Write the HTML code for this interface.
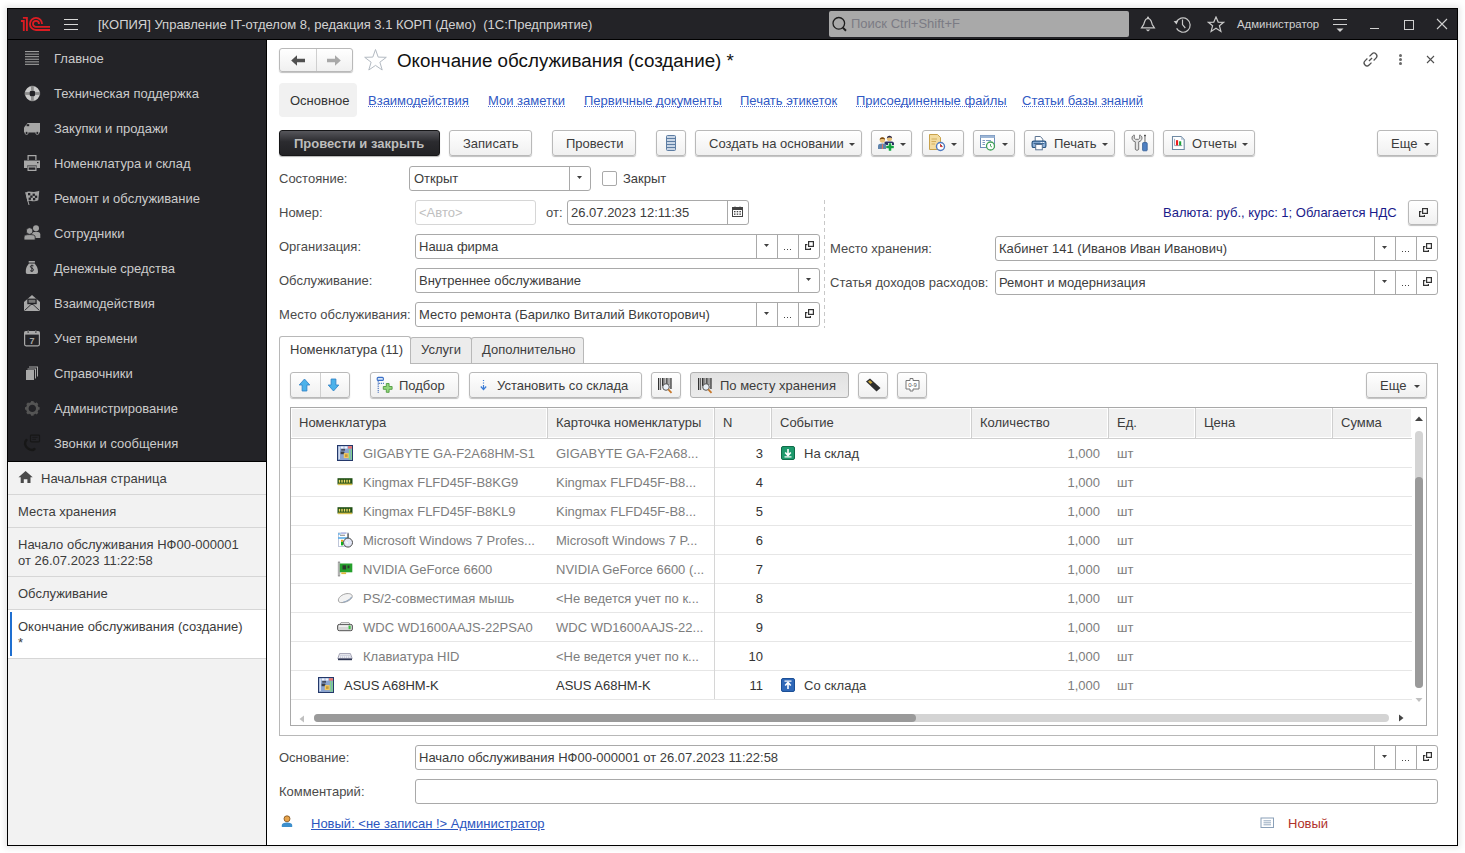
<!DOCTYPE html>
<html><head><meta charset="utf-8">
<style>
*{box-sizing:border-box}
html,body{margin:0;padding:0}
body{width:1465px;height:853px;overflow:hidden;background:#fff;position:relative;font-family:"Liberation Sans",sans-serif;font-size:13px;color:#3c3c3c}
.a{position:absolute}
.t{position:absolute;white-space:nowrap;line-height:15px;font-size:13px}
.sb{color:#cbcbcb}
.ic{position:absolute}
.lnk{color:#3159c4;border-bottom:1px dotted #4d6bd0;line-height:16px;height:14px}
.btn{position:absolute;border:1px solid #b9b9b9;border-radius:3px;background:linear-gradient(#fff,#f0f0f0);box-shadow:0 1px 1px rgba(0,0,0,.25);color:#333}
.fld{position:absolute;border:1px solid #a9a9a9;border-radius:3px;background:#fff}
.dv{position:absolute;top:0;bottom:0;width:1px;background:#a9a9a9}
.arr{position:absolute;width:0;height:0;border-left:3px solid transparent;border-right:3px solid transparent;border-top:3px solid #404040}
</style></head><body>
<!-- window -->
<div class="a" style="left:7px;top:8px;width:1451px;height:838px;border:1px solid #000;background:#fff;box-shadow:0 0 6px 2px rgba(0,0,0,.10)"></div>
<!-- title bar -->
<div class="a" style="left:8px;top:9px;width:1449px;height:30px;background:#232327"></div>
<div class="a" style="left:8px;top:39px;width:1449px;height:1px;background:#000"></div>
<!-- sidebar -->
<div class="a" style="left:8px;top:40px;width:258px;height:421px;background:#232327"></div>
<div class="a" style="left:8px;top:461px;width:258px;height:1px;background:#000"></div>
<div class="a" style="left:8px;top:462px;width:258px;height:383px;background:#f2f2f2"></div>
<div class="a" style="left:266px;top:40px;width:1px;height:805px;background:#000"></div>

<!-- TITLEBAR CONTENT -->
<div class="t" style="left:98px;top:17px;color:#d2d2d2">[КОПИЯ] Управление IT-отделом 8, редакция 3.1 КОРП (Демо)&nbsp; (1С:Предприятие)</div>

<!-- logo -->
<svg class="ic" style="left:18px;top:14px" width="34" height="20" viewBox="0 0 34 20"><g fill="none" stroke="#dc1c22" stroke-width="1.85" stroke-linejoin="miter">
<path d="M2.95 6.95H5.8V17"/><path d="M4.9 3.85H8.9V17"/>
<path d="M24.05 9.9A6.05 6.05 0 1 0 18 15.95H32"/><path d="M21 9.9A3 3 0 1 0 18 12.9H32"/></g></svg>
<div class="a" style="left:64px;top:19px;width:14px;height:1px;background:#d8d8d8"></div>
<div class="a" style="left:64px;top:24px;width:14px;height:1px;background:#d8d8d8"></div>
<div class="a" style="left:64px;top:29px;width:14px;height:1px;background:#d8d8d8"></div>
<!-- search -->
<div class="a" style="left:829px;top:11px;width:300px;height:26px;background:#a9a9a9;border-radius:2px"></div>
<svg class="ic" style="left:830px;top:15px" width="20" height="20" viewBox="0 0 20 20"><circle cx="8.8" cy="8.3" r="5.8" fill="none" stroke="#1e1e1e" stroke-width="1.3"/><path d="M12.8 12.6L16 15.8" stroke="#1e1e1e" stroke-width="2"/></svg>
<div class="t" style="left:851px;top:16px;color:#7b7b84">Поиск Ctrl+Shift+F</div>
<!-- bell -->
<svg class="ic" style="left:1140px;top:16px" width="16" height="17" viewBox="0 0 16 17"><g fill="none" stroke="#c8c8c8" stroke-width="1.2"><path d="M1.5 11.8H14.4L12.3 8.6C11.6 7.4 11.6 2.6 8 2.4C4.4 2.6 4.4 7.4 3.6 8.6Z"/></g><circle cx="8" cy="1.6" r="1" fill="#c8c8c8"/><path d="M5.6 13.4H10.4L8 15.4Z" fill="#c8c8c8"/></svg>
<!-- history -->
<svg class="ic" style="left:1173px;top:15px" width="19" height="19" viewBox="0 0 19 19"><g fill="none" stroke="#c8c8c8" stroke-width="1.2"><path d="M3.3 7.3A7.2 7.2 0 1 1 3.6 13.4"/><path d="M9.5 4.6V9.6L12.3 13"/></g><path d="M0.6 6.2L5.2 5.6L3.6 9.6Z" fill="#c8c8c8"/></svg>
<!-- star -->
<svg class="ic" style="left:1207px;top:16px" width="18" height="17" viewBox="0 0 18 17"><path d="M9 1L11.2 6.1L16.6 6.3L12.4 9.7L13.9 15.4L9 12.3L4.1 15.4L5.6 9.7L1.4 6.3L6.8 6.1Z" fill="none" stroke="#c8c8c8" stroke-width="1.2" stroke-linejoin="miter"/></svg>
<div class="t" style="left:1237px;top:17px;color:#d0d0d0;font-size:11.4px">Администратор</div>
<!-- filter -->
<div class="a" style="left:1333px;top:19px;width:14px;height:1px;background:#d0d0d0"></div>
<div class="a" style="left:1333px;top:24px;width:14px;height:1px;background:#d0d0d0"></div>
<svg class="ic" style="left:1336px;top:28px" width="8" height="5" viewBox="0 0 8 5"><path d="M0.5 0.5H7.5L4 4Z" fill="#d0d0d0"/></svg>
<div class="a" style="left:1370px;top:28px;width:9px;height:1px;background:#d0d0d0"></div>
<div class="a" style="left:1404px;top:20px;width:10px;height:10px;border:1.2px solid #d0d0d0"></div>
<svg class="ic" style="left:1436px;top:18px" width="12" height="12" viewBox="0 0 12 12"><path d="M1 1L11 11M11 1L1 11" stroke="#d0d0d0" stroke-width="1.1"/></svg>

<svg class="ic" style="left:0;top:0" width="266" height="460" viewBox="0 0 266 460">
<g fill="#9c9c9c"><rect x="25" y="51" width="14" height="1.1"/><rect x="25" y="53.6" width="14" height="1.1"/><rect x="25" y="56.1" width="14" height="1.1"/><rect x="25" y="58.7" width="14" height="1.1"/><rect x="25" y="61.3" width="14" height="1.1"/><rect x="25" y="63.8" width="14" height="1.1"/></g>
<circle cx="32.4" cy="93.5" r="5.3" fill="none" stroke="#cacaca" stroke-width="4.4"/>
<g fill="#8c8c8c"><rect x="31" y="85.8" width="2.8" height="4.6"/><rect x="31" y="96.6" width="2.8" height="4.6"/><rect x="24.7" y="92.1" width="4.6" height="2.8"/><rect x="35.5" y="92.1" width="4.6" height="2.8"/></g>
<path d="M24 132.5V127.6L27.6 123H40V132.5Z" fill="#a6a6a6"/><rect x="26.6" y="124.2" width="2.6" height="2" fill="#232327"/><circle cx="26.6" cy="133" r="1.5" fill="#232327" stroke="#a6a6a6" stroke-width="0.8"/><circle cx="37.3" cy="133" r="1.5" fill="#232327" stroke="#a6a6a6" stroke-width="0.8"/>
<g fill="#a8a8a8"><path d="M27.5 155H36.5V160H35.3V156.2H28.7V160H27.5Z"/><path d="M24 160.5H40V168H36.8V165.5H27.2V168H24Z"/><path d="M27.5 166.2H36.5V171H27.5ZM28.7 167.4V169.8H35.3V167.4Z"/></g><rect x="37" y="162" width="1.5" height="1.2" fill="#232327"/>
<path d="M25.8 192.5C29 190 33 193.5 39.3 190.8L38.3 200.3C33 203 29 199.5 27.3 201.5Z" fill="#a2a2a2"/>
<g fill="#232327"><rect x="28" y="193" width="2.3" height="2.3"/><rect x="32.6" y="193.6" width="2.3" height="2.3"/><rect x="30.3" y="195.5" width="2.3" height="2.3"/><rect x="34.9" y="195.6" width="2.3" height="2.3"/><rect x="28.6" y="197.6" width="2.3" height="2.3"/><rect x="33" y="198" width="2.3" height="2.3"/></g>
<path d="M25.6 192.3L29 205" stroke="#a2a2a2" stroke-width="1"/>
<g fill="#a0a0a0"><circle cx="36" cy="228.3" r="3"/><path d="M31.5 238V234.5C31.5 232.5 33.5 231.8 36 231.8C38.6 231.8 40.3 232.5 40.3 234.5V238Z"/><circle cx="29.6" cy="231" r="3.3" stroke="#232327" stroke-width="0.8"/><path d="M24 240V237C24 235 26.3 234.6 29.6 234.6C33 234.6 35.2 235 35.2 237V240Z" stroke="#232327" stroke-width="0.8"/></g>
<g fill="#a8a8a8"><rect x="28.7" y="261" width="6.2" height="1.6"/><path d="M29 263.6H34.6C35.6 265 38 267 38 271.5C38 273.3 37.4 274 36 274H27.6C26.2 274 25.8 273.3 25.8 271.5C25.8 267 28 265 29 263.6Z"/></g>
<path d="M33.5 265.8C32.5 265 30.2 265.2 30.4 266.8C30.6 268.5 33.5 267.8 33.5 269.8C33.5 271.5 31 271.4 30.1 270.6M31.9 264.8V272" stroke="#232327" stroke-width="0.9" fill="none"/>
<path d="M24 302L32 295L40 302V311H24Z" fill="#a8a8a8"/><rect x="27.3" y="298.6" width="9.4" height="5.6" fill="#232327"/><rect x="28.6" y="299.8" width="6.8" height="3" fill="#777"/><path d="M24.5 310.5L31 304.5H33L39.5 310.5" stroke="#232327" stroke-width="0.9" fill="none"/>
<rect x="24.6" y="331.6" width="14.8" height="14.2" rx="1.5" fill="none" stroke="#a8a8a8" stroke-width="1.2"/><rect x="24.6" y="331.6" width="14.8" height="3" fill="#a8a8a8"/><path d="M28.2 330V333M35.8 330V333" stroke="#232327" stroke-width="1.2"/><path d="M28.2 330.2V332.6M35.8 330.2V332.6" stroke="#a8a8a8" stroke-width="0.7"/>
<text x="32" y="344.4" font-family="Liberation Sans" font-weight="bold" font-size="9" fill="#a8a8a8" text-anchor="middle">7</text>
<g fill="#a8a8a8"><rect x="26" y="370" width="8" height="10"/><path d="M27.5 368.5H36V378.5H35V369.5H27.5Z"/><path d="M29 366.5H38V376.5H37V367.5H29Z"/></g>
<g transform="translate(32.3 408.4)"><circle r="5" fill="none" stroke="#555" stroke-width="2.6"/><g fill="#555"><rect x="-1.3" y="-7.3" width="2.6" height="3"/><rect x="-1.3" y="4.3" width="2.6" height="3"/><rect x="-7.3" y="-1.3" width="3" height="2.6"/><rect x="4.3" y="-1.3" width="3" height="2.6"/><g transform="rotate(45)"><rect x="-1.3" y="-7.3" width="2.6" height="3"/><rect x="-1.3" y="4.3" width="2.6" height="3"/><rect x="-7.3" y="-1.3" width="3" height="2.6"/><rect x="4.3" y="-1.3" width="3" height="2.6"/></g></g></g>
<path d="M26.5 440C24.2 442 24.5 446 28 448.5C31 450.5 33 450.4 34.5 449" stroke="#171717" stroke-width="2.4" fill="none" stroke-linecap="round"/>
<rect x="30.5" y="435.2" width="9" height="6.6" rx="0.8" fill="none" stroke="#171717" stroke-width="1.2"/><path d="M32.3 437.4H37.7M32.3 439.4H36" stroke="#171717" stroke-width="0.8"/>
</svg>
<!-- SIDEBAR ITEMS -->
<div class="t sb" style="left:54px;top:51px">Главное</div>
<div class="t sb" style="left:54px;top:86px">Техническая поддержка</div>
<div class="t sb" style="left:54px;top:121px">Закупки и продажи</div>
<div class="t sb" style="left:54px;top:156px">Номенклатура и склад</div>
<div class="t sb" style="left:54px;top:191px">Ремонт и обслуживание</div>
<div class="t sb" style="left:54px;top:226px">Сотрудники</div>
<div class="t sb" style="left:54px;top:261px">Денежные средства</div>
<div class="t sb" style="left:54px;top:296px">Взаимодействия</div>
<div class="t sb" style="left:54px;top:331px">Учет времени</div>
<div class="t sb" style="left:54px;top:366px">Справочники</div>
<div class="t sb" style="left:54px;top:401px">Администрирование</div>
<div class="t sb" style="left:54px;top:436px">Звонки и сообщения</div>

<!-- OPEN WINDOWS -->
<div class="a" style="left:8px;top:494px;width:258px;height:1px;background:#d6d6d6"></div>
<div class="a" style="left:8px;top:527px;width:258px;height:1px;background:#d6d6d6"></div>
<div class="a" style="left:8px;top:576px;width:258px;height:1px;background:#d6d6d6"></div>
<div class="a" style="left:8px;top:609px;width:258px;height:1px;background:#d6d6d6"></div>
<div class="a" style="left:8px;top:610px;width:258px;height:48px;background:#fff"></div>
<div class="a" style="left:8px;top:658px;width:258px;height:1px;background:#d6d6d6"></div>
<div class="a" style="left:10px;top:612px;width:2px;height:44px;background:#1f6fd0"></div>
<svg class="ic" style="left:18px;top:470px" width="16" height="14" viewBox="0 0 16 14"><path d="M0.5 7.3L7.6 1L14.7 7.3H12.5V13H9.4V9.2H5.8V13H2.7V7.3Z" fill="#4a4a4a"/></svg>
<div class="t" style="left:41px;top:471px">Начальная страница</div>
<div class="t" style="left:18px;top:504px">Места хранения</div>
<div class="t" style="left:18px;top:537px">Начало обслуживания НФ00-000001</div>
<div class="t" style="left:18px;top:553px">от 26.07.2023 11:22:58</div>
<div class="t" style="left:18px;top:586px">Обслуживание</div>
<div class="t" style="left:18px;top:619px">Окончание обслуживания (создание)</div>
<div class="t" style="left:18px;top:635px">*</div>

<!--CONTENT-->
<div class="btn" style="left:279px;top:48px;width:74px;height:24px;"></div>
<div class="a" style="left:316px;top:49px;width:1px;height:22px;background:#cfcfcf"></div>
<svg class="ic" style="left:290px;top:54px" width="16" height="13" viewBox="0 0 16 13"><path d="M1.2 6.5L7 1.3V4.8H15V8.2H7V11.7Z" fill="#505050"/></svg>
<svg class="ic" style="left:326px;top:54px" width="16" height="13" viewBox="0 0 16 13"><path d="M14.8 6.5L9 1.3V4.8H1V8.2H9V11.7Z" fill="#a8a8a8"/></svg>
<svg class="ic" style="left:363px;top:48px" width="25" height="24" viewBox="0 0 25 24"><path d="M12.5 1.5L15.2 9.1L23.3 9.3L16.9 14.2L19.2 22L12.5 17.4L5.8 22L8.1 14.2L1.7 9.3L9.8 9.1Z" fill="none" stroke="#b3bac2" stroke-width="1"/></svg>
<div class="t" style="left:397px;top:50px;font-size:18.8px;line-height:22px;color:#111">Окончание обслуживания (создание) *</div>
<svg class="ic" style="left:1362px;top:51px" width="17" height="17" viewBox="0 0 17 17"><g transform="rotate(-45 8.5 8.5)" fill="none" stroke="#505050" stroke-width="1.25"><path d="M7 5.6H3.6A2.9 2.9 0 0 0 3.6 11.4H7"/><path d="M10 5.6H13.4A2.9 2.9 0 0 1 13.4 11.4H10"/><path d="M6.3 8.5H10.7"/></g></svg>
<div class="a" style="left:1399px;top:54px;width:3px;height:3px;background:#6a6a6a;border-radius:50%"></div>
<div class="a" style="left:1399px;top:58px;width:3px;height:3px;background:#6a6a6a;border-radius:50%"></div>
<div class="a" style="left:1399px;top:62px;width:3px;height:3px;background:#6a6a6a;border-radius:50%"></div>
<svg class="ic" style="left:1426px;top:55px" width="9" height="9" viewBox="0 0 9 9"><path d="M1 1L8 8M8 1L1 8" stroke="#505050" stroke-width="1.1"/></svg>
<div class="a" style="left:279px;top:83px;width:78px;height:34px;background:#f1f1f1;border-radius:4px"></div>
<div class="t" style="left:290px;top:93px;color:#333">Основное</div>
<div class="t lnk" style="left:368px;top:93px">Взаимодействия</div>
<div class="t lnk" style="left:488px;top:93px">Мои заметки</div>
<div class="t lnk" style="left:584px;top:93px">Первичные документы</div>
<div class="t lnk" style="left:740px;top:93px">Печать этикеток</div>
<div class="t lnk" style="left:856px;top:93px">Присоединенные файлы</div>
<div class="t lnk" style="left:1022px;top:93px">Статьи базы знаний</div>
<div class="a" style="left:279px;top:130px;width:161px;height:26px;border:1px solid #161618;border-radius:3px;background:linear-gradient(#56565b 0%,#2b2b2f 45%,#222225 100%);box-shadow:0 1px 1px rgba(0,0,0,.3)"></div>
<div class="t" style="left:294px;top:136px;font-weight:bold;color:#bdbdbd">Провести и закрыть</div>
<div class="btn" style="left:449px;top:130px;width:83px;height:26px;"></div>
<div class="t" style="left:463px;top:136px;">Записать</div>
<div class="btn" style="left:552px;top:130px;width:84px;height:26px;"></div>
<div class="t" style="left:566px;top:136px;">Провести</div>
<div class="btn" style="left:656px;top:130px;width:30px;height:26px;"></div>
<svg class="ic" style="left:664px;top:134px" width="14" height="18" viewBox="0 0 14 18"><rect x="2.5" y="1.5" width="9" height="15" rx="1" fill="#c9d6e6" stroke="#5d7da3" stroke-width="1"/><path d="M3 4.5H11M3 7.5H11M3 10.5H11M3 13.5H11" stroke="#5d7da3" stroke-width="1"/></svg>
<div class="btn" style="left:695px;top:130px;width:167px;height:26px;"></div>
<div class="t" style="left:709px;top:136px;">Создать на основании</div>
<svg class="ic" style="left:849px;top:143px" width="6" height="3" viewBox="0 0 6 3"><path d="M0 0H6L3 3Z" fill="#404040"/></svg>
<div class="btn" style="left:871px;top:130px;width:41px;height:26px;"></div>
<svg class="ic" style="left:900px;top:143px" width="6" height="3" viewBox="0 0 6 3"><path d="M0 0H6L3 3Z" fill="#404040"/></svg>
<svg class="ic" style="left:877px;top:134px" width="18" height="18" viewBox="0 0 18 18"><path d="M7.5 11V8.3C7.5 7.4 9.6 7.6 12.5 7.6C15.4 7.6 17 7.9 17 9.5V11Z" fill="#2b3264"/><circle cx="12.5" cy="4.4" r="2.6" fill="#e9c27a"/><path d="M9.9 4.2C9.9 2.6 11 1.7 12.5 1.7C14 1.7 15.1 2.6 15.1 4.2C14.3 3.2 10.7 3.2 9.9 4.2Z" fill="#2a2a52"/><path d="M1 15V11.8C1 10.4 2.8 9.6 5.4 9.6C8 9.6 9.6 10.4 9.6 11.8V15Z" fill="#5e84ad"/><path d="M5 10H5.9L6.1 15H4.8Z" fill="#e0785e"/><circle cx="5.4" cy="6" r="2.7" fill="#e9c27a"/><path d="M2.7 5.8C2.7 4.1 3.8 3.2 5.4 3.2C7 3.2 8.1 4.1 8.1 5.8C7.3 4.8 3.5 4.8 2.7 5.8Z" fill="#7a4a12"/><path d="M13 9V17M9 13H17" stroke="#fff" stroke-width="4"/><path d="M13 9.2V16.8M9.2 13H16.8" stroke="#12a040" stroke-width="2.6"/></svg>
<div class="btn" style="left:922px;top:130px;width:42px;height:26px;"></div>
<svg class="ic" style="left:951px;top:143px" width="6" height="3" viewBox="0 0 6 3"><path d="M0 0H6L3 3Z" fill="#404040"/></svg>
<svg class="ic" style="left:928px;top:133px" width="18" height="19" viewBox="0 0 18 19"><path d="M1.5 1.5H9.5L12.5 4.5V16.5H1.5Z" fill="#f3dca0" stroke="#c9a24b" stroke-width="1"/><path d="M3.5 6H9M3.5 8.5H8M3.5 11H7" stroke="#c9a24b" stroke-width="0.8"/><circle cx="12.5" cy="13.5" r="4" fill="#fff" stroke="#4d79c0" stroke-width="1.4"/><path d="M12.5 11.2V13.6H14.5" stroke="#d33" stroke-width="1"/></svg>
<div class="btn" style="left:973px;top:130px;width:42px;height:26px;"></div>
<svg class="ic" style="left:1002px;top:143px" width="6" height="3" viewBox="0 0 6 3"><path d="M0 0H6L3 3Z" fill="#404040"/></svg>
<svg class="ic" style="left:979px;top:134px" width="18" height="18" viewBox="0 0 18 18"><rect x="1.5" y="1.5" width="14" height="12" fill="#fff" stroke="#6f8fb8" stroke-width="1"/><rect x="1.5" y="1.5" width="14" height="2.5" fill="#9db6d6"/><path d="M3.5 6.5H6M3.5 8.5H6M3.5 10.5H6M7 6.5H12" stroke="#6f8fb8" stroke-width="0.9"/><circle cx="11.5" cy="12" r="4" fill="#fff" stroke="#3fa057" stroke-width="1.3"/><path d="M11.5 10V12.2L13 13" stroke="#3fa057" stroke-width="0.9" fill="none"/></svg>
<div class="btn" style="left:1024px;top:130px;width:91px;height:26px;"></div>
<div class="t" style="left:1054px;top:136px;">Печать</div>
<svg class="ic" style="left:1102px;top:143px" width="6" height="3" viewBox="0 0 6 3"><path d="M0 0H6L3 3Z" fill="#404040"/></svg>
<svg class="ic" style="left:1031px;top:135px" width="16" height="16" viewBox="0 0 16 16"><path d="M4.2 6V1.5H9.4L11.8 4.2V6" fill="#fff" stroke="#5b7391" stroke-width="1"/><rect x="1.1" y="6.1" width="13.8" height="6.4" rx="1.6" fill="#8fb2da" stroke="#2a5682" stroke-width="1.2"/><path d="M2.6 8.4H13.4" stroke="#2a5682" stroke-width="0.9"/><rect x="9.6" y="7" width="1.2" height="1" fill="#fff"/><rect x="11.7" y="7" width="1.2" height="1" fill="#fff"/><rect x="4.7" y="9.5" width="6.6" height="5.3" fill="#fff" stroke="#5b7391" stroke-width="1"/></svg>
<div class="btn" style="left:1124px;top:130px;width:30px;height:26px;"></div>
<svg class="ic" style="left:1130px;top:134px" width="18" height="18" viewBox="0 0 18 18"><path d="M2 4C2 2.5 3 1.2 4.3 1V4.3L5.5 5.3H8.5L9.7 4.3V1C11 1.2 12 2.5 12 4C12 6 10.8 7.3 8.7 7.8V15.2C8.7 16.6 5.3 16.6 5.3 15.2V7.8C3.2 7.3 2 6 2 4Z" fill="#e2e2e2" stroke="#6a6a6a" stroke-width="0.9"/><rect x="14.3" y="1" width="1.3" height="8" fill="#8a8a8a"/><rect x="14.1" y="0.8" width="1.7" height="1.4" fill="#444"/><rect x="12.6" y="8.6" width="4.6" height="8.2" rx="0.8" fill="#4f80c2" stroke="#2e5a94" stroke-width="0.8"/></svg>
<div class="btn" style="left:1163px;top:130px;width:92px;height:26px;"></div>
<div class="t" style="left:1192px;top:136px;">Отчеты</div>
<svg class="ic" style="left:1242px;top:143px" width="6" height="3" viewBox="0 0 6 3"><path d="M0 0H6L3 3Z" fill="#404040"/></svg>
<svg class="ic" style="left:1171px;top:135px" width="15" height="16" viewBox="0 0 15 16"><path d="M1.5 1.5H10L13.2 4.7V14.5H1.5Z" fill="#fff" stroke="#6f8aa3" stroke-width="1.1"/><path d="M10 1.5V4.7H13.2Z" fill="#b9c8d8"/><path d="M3.6 3.8V10.6H11.2" stroke="#7d8da6" stroke-width="0.8" fill="none"/><rect x="5" y="5.2" width="2.1" height="5.2" fill="#ee1c1c"/><rect x="8.1" y="6.3" width="2.1" height="4.1" fill="#1fa33a"/></svg>
<div class="btn" style="left:1377px;top:130px;width:61px;height:26px;"></div>
<div class="t" style="left:1391px;top:136px;">Еще</div>
<svg class="ic" style="left:1424px;top:143px" width="6" height="3" viewBox="0 0 6 3"><path d="M0 0H6L3 3Z" fill="#404040"/></svg>
<div class="t" style="left:279px;top:171px;color:#4a4a4a">Состояние:</div>
<div class="fld" style="left:409px;top:166px;width:182px;height:25px;"><div class="dv" style="left:159px"></div></div>
<div class="t" style="left:414px;top:171px;">Открыт</div>
<svg class="ic" style="left:577px;top:176px" width="5" height="3" viewBox="0 0 5 3"><path d="M0 0H5L2.5 3Z" fill="#404040"/></svg>
<div class="a" style="left:602px;top:171px;width:15px;height:15px;border:1px solid #a9a9a9;border-radius:2px;background:#fff"></div>
<div class="t" style="left:623px;top:171px;">Закрыт</div>
<div class="t" style="left:279px;top:205px;color:#4a4a4a">Номер:</div>
<div class="fld" style="left:415px;top:200px;width:121px;height:25px;border-color:#d6d6d6"></div>
<div class="t" style="left:419px;top:205px;color:#c0c0c0">&lt;Авто&gt;</div>
<div class="t" style="left:546px;top:205px;color:#4a4a4a">от:</div>
<div class="fld" style="left:567px;top:200px;width:182px;height:25px;"><div class="dv" style="left:159px"></div></div>
<div class="t" style="left:571px;top:205px;">26.07.2023 12:11:35</div>
<svg class="ic" style="left:732px;top:206px" width="11" height="11" viewBox="0 0 11 11"><rect x="0.5" y="1.5" width="10" height="9" fill="none" stroke="#444" stroke-width="1"/><rect x="0.5" y="1.5" width="10" height="2.5" fill="#444"/><path d="M3 0.5V2M8 0.5V2" stroke="#444"/><g fill="#444"><rect x="2" y="5" width="1.5" height="1.3"/><rect x="4.7" y="5" width="1.5" height="1.3"/><rect x="7.4" y="5" width="1.5" height="1.3"/><rect x="2" y="7.5" width="1.5" height="1.3"/><rect x="4.7" y="7.5" width="1.5" height="1.3"/><rect x="7.4" y="7.5" width="1.5" height="1.3"/></g></svg>
<div class="t" style="left:279px;top:239px;color:#4a4a4a">Организация:</div>
<div class="fld" style="left:415px;top:234px;width:405px;height:25px;"><div class="dv" style="left:340px"></div><div class="dv" style="left:361px"></div><div class="dv" style="left:382px"></div></div>
<div class="t" style="left:419px;top:239px;">Наша фирма</div>
<svg class="ic" style="left:764px;top:244px" width="5" height="3" viewBox="0 0 5 3"><path d="M0 0H5L2.5 3Z" fill="#404040"/></svg>
<div class="a" style="left:784px;top:249px;width:1px;height:1px;background:#444"></div>
<div class="a" style="left:787px;top:249px;width:1px;height:1px;background:#444"></div>
<div class="a" style="left:790px;top:249px;width:1px;height:1px;background:#444"></div>
<svg class="ic" style="left:804px;top:240px" width="11" height="11" viewBox="0 0 11 11"><path d="M3.4 4.6H1.6V9.4H6.4V8" fill="none" stroke="#333" stroke-width="1.2"/><rect x="4.6" y="1.6" width="4.8" height="4.8" fill="none" stroke="#333" stroke-width="1.2"/></svg>
<div class="t" style="left:279px;top:273px;color:#4a4a4a">Обслуживание:</div>
<div class="fld" style="left:415px;top:268px;width:405px;height:25px;"><div class="dv" style="left:382px"></div></div>
<div class="t" style="left:419px;top:273px;">Внутреннее обслуживание</div>
<svg class="ic" style="left:806px;top:278px" width="5" height="3" viewBox="0 0 5 3"><path d="M0 0H5L2.5 3Z" fill="#404040"/></svg>
<div class="t" style="left:279px;top:307px;color:#4a4a4a">Место обслуживания:</div>
<div class="fld" style="left:415px;top:302px;width:405px;height:25px;"><div class="dv" style="left:340px"></div><div class="dv" style="left:361px"></div><div class="dv" style="left:382px"></div></div>
<div class="t" style="left:419px;top:307px;">Место ремонта (Барилко Виталий Викоторович)</div>
<svg class="ic" style="left:764px;top:312px" width="5" height="3" viewBox="0 0 5 3"><path d="M0 0H5L2.5 3Z" fill="#404040"/></svg>
<div class="a" style="left:784px;top:317px;width:1px;height:1px;background:#444"></div>
<div class="a" style="left:787px;top:317px;width:1px;height:1px;background:#444"></div>
<div class="a" style="left:790px;top:317px;width:1px;height:1px;background:#444"></div>
<svg class="ic" style="left:804px;top:308px" width="11" height="11" viewBox="0 0 11 11"><path d="M3.4 4.6H1.6V9.4H6.4V8" fill="none" stroke="#333" stroke-width="1.2"/><rect x="4.6" y="1.6" width="4.8" height="4.8" fill="none" stroke="#333" stroke-width="1.2"/></svg>
<div class="a" style="left:824px;top:200px;width:1px;height:128px;background:repeating-linear-gradient(#c8c8c8 0 4px,transparent 4px 7px)"></div>
<div class="t" style="left:1163px;top:205px;color:#1a1a8a">Валюта: руб., курс: 1; Облагается НДС</div>
<div class="btn" style="left:1408px;top:200px;width:30px;height:25px;"></div>
<svg class="ic" style="left:1418px;top:207px" width="11" height="11" viewBox="0 0 11 11"><path d="M3.4 4.6H1.6V9.4H6.4V8" fill="none" stroke="#333" stroke-width="1.2"/><rect x="4.6" y="1.6" width="4.8" height="4.8" fill="none" stroke="#333" stroke-width="1.2"/></svg>
<div class="t" style="left:830px;top:241px;color:#4a4a4a">Место хранения:</div>
<div class="fld" style="left:995px;top:236px;width:443px;height:25px;"><div class="dv" style="left:378px"></div><div class="dv" style="left:399px"></div><div class="dv" style="left:420px"></div></div>
<div class="t" style="left:999px;top:241px;">Кабинет 141 (Иванов Иван Иванович)</div>
<svg class="ic" style="left:1382px;top:246px" width="5" height="3" viewBox="0 0 5 3"><path d="M0 0H5L2.5 3Z" fill="#404040"/></svg>
<div class="a" style="left:1402px;top:251px;width:1px;height:1px;background:#444"></div>
<div class="a" style="left:1405px;top:251px;width:1px;height:1px;background:#444"></div>
<div class="a" style="left:1408px;top:251px;width:1px;height:1px;background:#444"></div>
<svg class="ic" style="left:1422px;top:242px" width="11" height="11" viewBox="0 0 11 11"><path d="M3.4 4.6H1.6V9.4H6.4V8" fill="none" stroke="#333" stroke-width="1.2"/><rect x="4.6" y="1.6" width="4.8" height="4.8" fill="none" stroke="#333" stroke-width="1.2"/></svg>
<div class="t" style="left:830px;top:275px;color:#4a4a4a">Статья доходов расходов:</div>
<div class="fld" style="left:995px;top:270px;width:443px;height:25px;"><div class="dv" style="left:378px"></div><div class="dv" style="left:399px"></div><div class="dv" style="left:420px"></div></div>
<div class="t" style="left:999px;top:275px;">Ремонт и модернизация</div>
<svg class="ic" style="left:1382px;top:280px" width="5" height="3" viewBox="0 0 5 3"><path d="M0 0H5L2.5 3Z" fill="#404040"/></svg>
<div class="a" style="left:1402px;top:285px;width:1px;height:1px;background:#444"></div>
<div class="a" style="left:1405px;top:285px;width:1px;height:1px;background:#444"></div>
<div class="a" style="left:1408px;top:285px;width:1px;height:1px;background:#444"></div>
<svg class="ic" style="left:1422px;top:276px" width="11" height="11" viewBox="0 0 11 11"><path d="M3.4 4.6H1.6V9.4H6.4V8" fill="none" stroke="#333" stroke-width="1.2"/><rect x="4.6" y="1.6" width="4.8" height="4.8" fill="none" stroke="#333" stroke-width="1.2"/></svg>
<div class="a" style="left:279px;top:363px;width:1159px;height:373px;border:1px solid #b8b8b8;background:#fff"></div>
<div class="a" style="left:279px;top:336px;width:132px;height:28px;border:1px solid #b8b8b8;border-bottom:none;border-radius:3px 3px 0 0;background:#fff"></div>
<div class="a" style="left:410px;top:337px;width:62px;height:26px;border:1px solid #b8b8b8;border-bottom:none;border-radius:3px 3px 0 0;background:#ececec"></div>
<div class="a" style="left:471px;top:337px;width:113px;height:26px;border:1px solid #b8b8b8;border-bottom:none;border-radius:3px 3px 0 0;background:#ececec"></div>
<div class="t" style="left:290px;top:342px;">Номенклатура (11)</div>
<div class="t" style="left:421px;top:342px;">Услуги</div>
<div class="t" style="left:482px;top:342px;">Дополнительно</div>
<div class="btn" style="left:290px;top:372px;width:60px;height:26px;"></div>
<div class="a" style="left:320px;top:373px;width:1px;height:24px;background:#cfcfcf"></div>
<svg class="ic" style="left:298px;top:378px" width="13" height="14" viewBox="0 0 13 14"><path d="M6.5 1L11.8 7H8.9V13H4.1V7H1.2Z" fill="#4cb2ea" stroke="#2c7fc4" stroke-width="0.8" stroke-linejoin="round"/></svg>
<svg class="ic" style="left:327px;top:378px" width="13" height="14" viewBox="0 0 13 14"><path d="M6.5 13L11.8 7H8.9V1H4.1V7H1.2Z" fill="#4cb2ea" stroke="#2c7fc4" stroke-width="0.8" stroke-linejoin="round"/></svg>
<div class="btn" style="left:370px;top:372px;width:89px;height:26px;"></div>
<div class="t" style="left:399px;top:378px;">Подбор</div>
<svg class="ic" style="left:376px;top:376px" width="18" height="18" viewBox="0 0 18 18"><rect x="1.2" y="1.4" width="6.2" height="3" rx="1" fill="#d6e6f8" stroke="#3a6fc8" stroke-width="1.1"/><path d="M2.2 5.2V17M2.6 7.3H8" stroke="#2f5fb5" stroke-width="1" stroke-dasharray="1.3 0.9"/><path transform="translate(1.2 0.9)" d="M9.1 6.6H11.9V9.6H14.9V12.4H11.9V15.4H9.1V12.4H6.1V9.6H9.1Z" fill="#92d67c" stroke="#4f9a3e" stroke-width="0.9" stroke-linejoin="round"/></svg>
<div class="btn" style="left:469px;top:372px;width:173px;height:26px;"></div>
<div class="t" style="left:497px;top:378px;">Установить со склада</div>
<svg class="ic" style="left:480px;top:379px" width="7" height="12" viewBox="0 0 7 12"><path d="M3.5 1V2M3.5 3.5V4.5M3.5 6V10" stroke="#3a7bd5" stroke-width="1.2"/><path d="M0.8 7.5L3.5 10.5L6.2 7.5" fill="none" stroke="#3a7bd5" stroke-width="1.2"/></svg>
<div class="btn" style="left:651px;top:372px;width:30px;height:26px;"></div>
<svg class="ic" style="left:657px;top:377px" width="18" height="18" viewBox="0 0 18 18"><g fill="#333"><rect x="1" y="1" width="1.3" height="12"/><rect x="3.3" y="1" width="0.8" height="12"/><rect x="5" y="1" width="1.6" height="8"/><rect x="7.5" y="1" width="0.8" height="7"/><rect x="9.2" y="1" width="1.4" height="6"/><rect x="11.6" y="1" width="0.8" height="7"/><rect x="13.3" y="1" width="1.3" height="11"/></g><circle cx="9" cy="10" r="3.3" fill="#e8f0f8" fill-opacity=".8" stroke="#555" stroke-width="1"/><path d="M11.3 12.4L14.5 15.8" stroke="#c8782a" stroke-width="1.8"/></svg>
<div class="a" style="left:690px;top:372px;width:159px;height:26px;border:1px solid #b0b0b0;border-radius:3px;background:linear-gradient(#e2e2e2,#ebebeb)"></div>
<svg class="ic" style="left:697px;top:377px" width="18" height="18" viewBox="0 0 18 18"><g fill="#333"><rect x="1" y="1" width="1.3" height="12"/><rect x="3.3" y="1" width="0.8" height="12"/><rect x="5" y="1" width="1.6" height="8"/><rect x="7.5" y="1" width="0.8" height="7"/><rect x="9.2" y="1" width="1.4" height="6"/><rect x="11.6" y="1" width="0.8" height="7"/><rect x="13.3" y="1" width="1.3" height="11"/></g><circle cx="9" cy="10" r="3.3" fill="#e8f0f8" fill-opacity=".8" stroke="#555" stroke-width="1"/><path d="M11.3 12.4L14.5 15.8" stroke="#c8782a" stroke-width="1.8"/></svg>
<div class="t" style="left:720px;top:378px;">По месту хранения</div>
<div class="btn" style="left:858px;top:372px;width:30px;height:26px;"></div>
<svg class="ic" style="left:864px;top:377px" width="18" height="16" viewBox="0 0 18 16"><path d="M2 4.5L6 1.5L16.5 11L12.5 14.5Z" fill="#2e2e2e"/><path d="M4 4.6L6 3.2L8.5 5.5L6.4 7Z" fill="#c9a63a"/></svg>
<div class="btn" style="left:897px;top:372px;width:30px;height:26px;"></div>
<svg class="ic" style="left:903px;top:376px" width="18" height="18" viewBox="0 0 18 18"><path d="M3 4.5H7V2.5H10V4.5H16V13H10V15H7V13H3Z" fill="#fff" stroke="#777" stroke-width="1"/><text x="9.5" y="11.3" font-family="Liberation Sans" font-size="6" fill="#555" text-anchor="middle">0-9</text></svg>
<div class="btn" style="left:1366px;top:372px;width:61px;height:26px;"></div>
<div class="t" style="left:1380px;top:378px;">Еще</div>
<svg class="ic" style="left:1414px;top:385px" width="6" height="3" viewBox="0 0 6 3"><path d="M0 0H6L3 3Z" fill="#404040"/></svg>
<!--TABLE-->
<div class="a" style="left:290px;top:407px;width:1137px;height:319px;border:1px solid #a9a9a9;background:#fff"></div>
<div class="a" style="left:292px;top:409px;width:254px;height:28px;background:#f0f0f0"></div>
<div class="a" style="left:548px;top:409px;width:165px;height:28px;background:#f0f0f0"></div>
<div class="a" style="left:715px;top:409px;width:55px;height:28px;background:#f0f0f0"></div>
<div class="a" style="left:772px;top:409px;width:198px;height:28px;background:#f0f0f0"></div>
<div class="a" style="left:972px;top:409px;width:135px;height:28px;background:#f0f0f0"></div>
<div class="a" style="left:1109px;top:409px;width:85px;height:28px;background:#f0f0f0"></div>
<div class="a" style="left:1196px;top:409px;width:135px;height:28px;background:#f0f0f0"></div>
<div class="a" style="left:1333px;top:409px;width:78px;height:28px;background:#f0f0f0"></div>
<div class="a" style="left:547px;top:408px;width:1px;height:30px;background:#cfcfcf"></div>
<div class="a" style="left:714px;top:408px;width:1px;height:30px;background:#cfcfcf"></div>
<div class="a" style="left:771px;top:408px;width:1px;height:30px;background:#cfcfcf"></div>
<div class="a" style="left:971px;top:408px;width:1px;height:30px;background:#cfcfcf"></div>
<div class="a" style="left:1108px;top:408px;width:1px;height:30px;background:#cfcfcf"></div>
<div class="a" style="left:1195px;top:408px;width:1px;height:30px;background:#cfcfcf"></div>
<div class="a" style="left:1332px;top:408px;width:1px;height:30px;background:#cfcfcf"></div>
<div class="a" style="left:291px;top:438px;width:1121px;height:1px;background:#cfcfcf"></div>
<div class="t" style="left:299px;top:415px;">Номенклатура</div>
<div class="t" style="left:556px;top:415px;">Карточка номенклатуры</div>
<div class="t" style="left:723px;top:415px;">N</div>
<div class="t" style="left:780px;top:415px;">Событие</div>
<div class="t" style="left:980px;top:415px;">Количество</div>
<div class="t" style="left:1117px;top:415px;">Ед.</div>
<div class="t" style="left:1204px;top:415px;">Цена</div>
<div class="t" style="left:1341px;top:415px;">Сумма</div>
<div class="a" style="left:291px;top:467px;width:1121px;height:1px;background:#e6e6e6"></div>
<svg class="ic" style="left:337px;top:445px" width="16" height="16" viewBox="0 0 16 16"><rect x="0.5" y="0.5" width="15" height="15" fill="#8aa3cf" stroke="#24386a"/><rect x="1.6" y="1.6" width="1.2" height="12.5" fill="#e6ecf6"/><rect x="3.6" y="1.4" width="3" height="2.2" fill="#f3f6fb"/><rect x="7.4" y="1.4" width="3" height="2.2" fill="#f3f6fb"/><rect x="11" y="1.2" width="4" height="2.4" fill="#e8756c"/><rect x="4.2" y="3.9" width="3.8" height="1.8" fill="#454c5e"/><rect x="3.6" y="6.6" width="3.8" height="2.6" fill="#3a3f4a"/><rect x="6.8" y="8.1" width="5" height="5" fill="#f2c860"/><rect x="8" y="9.3" width="2.6" height="2.6" fill="#c49a3a"/><rect x="11.9" y="4.2" width="1" height="10.6" fill="#7fdc7f"/><rect x="13.8" y="4.2" width="1" height="10.6" fill="#7fdc7f"/></svg>
<div class="t" style="left:363px;top:446px;color:#7d7d7d">GIGABYTE GA-F2A68HM-S1</div>
<div class="t" style="left:556px;top:446px;color:#7d7d7d">GIGABYTE GA-F2A68...</div>
<div class="t" style="right:702px;top:446px;color:#333">3</div>
<svg class="ic" style="left:781px;top:446px" width="14" height="14" viewBox="0 0 14 14"><rect x="0.5" y="0.5" width="13" height="13" rx="1.5" fill="#1d9a6c" stroke="#0f6b48"/><path d="M7 3V8.5M4.2 6.5L7 9.6L9.8 6.5" stroke="#fff" stroke-width="1.6" fill="none"/><rect x="3.5" y="10.3" width="7" height="1.2" fill="#fff"/></svg>
<div class="t" style="left:804px;top:446px;">На склад</div>
<div class="t" style="right:365px;top:446px;color:#7d7d7d">1,000</div>
<div class="t" style="left:1117px;top:446px;color:#7d7d7d">шт</div>
<div class="a" style="left:291px;top:496px;width:1121px;height:1px;background:#e6e6e6"></div>
<svg class="ic" style="left:337px;top:474px" width="16" height="16" viewBox="0 0 16 16"><rect x="0.5" y="4.2" width="15" height="6.3" fill="#1e4f14"/><g fill="#f0dc6a"><rect x="1.8" y="5.8" width="1.4" height="2.8"/><rect x="4.3" y="5.8" width="1.4" height="2.8"/><rect x="6.8" y="5.8" width="1.4" height="2.8"/><rect x="9.3" y="5.8" width="1.4" height="2.8"/><rect x="11.8" y="5.8" width="1.4" height="2.8"/></g><rect x="1" y="9.6" width="14" height="1.6" fill="#d8c050"/></svg>
<div class="t" style="left:363px;top:475px;color:#7d7d7d">Kingmax FLFD45F-B8KG9</div>
<div class="t" style="left:556px;top:475px;color:#7d7d7d">Kingmax FLFD45F-B8...</div>
<div class="t" style="right:702px;top:475px;color:#333">4</div>
<div class="t" style="right:365px;top:475px;color:#7d7d7d">1,000</div>
<div class="t" style="left:1117px;top:475px;color:#7d7d7d">шт</div>
<div class="a" style="left:291px;top:525px;width:1121px;height:1px;background:#e6e6e6"></div>
<svg class="ic" style="left:337px;top:503px" width="16" height="16" viewBox="0 0 16 16"><rect x="0.5" y="4.2" width="15" height="6.3" fill="#1e4f14"/><g fill="#f0dc6a"><rect x="1.8" y="5.8" width="1.4" height="2.8"/><rect x="4.3" y="5.8" width="1.4" height="2.8"/><rect x="6.8" y="5.8" width="1.4" height="2.8"/><rect x="9.3" y="5.8" width="1.4" height="2.8"/><rect x="11.8" y="5.8" width="1.4" height="2.8"/></g><rect x="1" y="9.6" width="14" height="1.6" fill="#d8c050"/></svg>
<div class="t" style="left:363px;top:504px;color:#7d7d7d">Kingmax FLFD45F-B8KL9</div>
<div class="t" style="left:556px;top:504px;color:#7d7d7d">Kingmax FLFD45F-B8...</div>
<div class="t" style="right:702px;top:504px;color:#333">5</div>
<div class="t" style="right:365px;top:504px;color:#7d7d7d">1,000</div>
<div class="t" style="left:1117px;top:504px;color:#7d7d7d">шт</div>
<div class="a" style="left:291px;top:554px;width:1121px;height:1px;background:#e6e6e6"></div>
<svg class="ic" style="left:337px;top:532px" width="16" height="16" viewBox="0 0 16 16"><rect x="1.5" y="1" width="10" height="13.5" fill="#fff" stroke="#b0b8d0" stroke-width="0.8"/><rect x="4" y="0.4" width="5" height="1.6" fill="#b8bde8"/><rect x="3" y="2.8" width="5" height="0.8" fill="#666"/><rect x="1" y="5.2" width="10" height="1.6" fill="#5aaeea"/><rect x="1" y="1.4" width="2.6" height="1.2" fill="#5aaeea"/><rect x="4" y="7.8" width="2.3" height="2" fill="#f0a020"/><rect x="4" y="9.8" width="2.3" height="3.6" fill="#10b020"/><circle cx="11" cy="10.6" r="4.5" fill="#e2e6f6" stroke="#4a4a4a" stroke-width="1"/><path d="M9 9L11 10.6L10 12.6Z" fill="#fff"/><rect x="10.4" y="1.4" width="1.2" height="4.5" fill="#444"/></svg>
<div class="t" style="left:363px;top:533px;color:#7d7d7d">Microsoft Windows 7 Profes...</div>
<div class="t" style="left:556px;top:533px;color:#7d7d7d">Microsoft Windows 7 P...</div>
<div class="t" style="right:702px;top:533px;color:#333">6</div>
<div class="t" style="right:365px;top:533px;color:#7d7d7d">1,000</div>
<div class="t" style="left:1117px;top:533px;color:#7d7d7d">шт</div>
<div class="a" style="left:291px;top:583px;width:1121px;height:1px;background:#e6e6e6"></div>
<svg class="ic" style="left:337px;top:561px" width="16" height="16" viewBox="0 0 16 16"><rect x="1.2" y="1" width="1.6" height="14" fill="#fff" stroke="#666" stroke-width="0.6"/><rect x="2.8" y="2.5" width="12.5" height="8.8" fill="#26a02c"/><rect x="5.5" y="4.3" width="3.6" height="4.2" fill="#2b3a2b"/><rect x="10.5" y="4.5" width="2" height="2.8" fill="#2b3a2b"/><rect x="4.3" y="11.3" width="4.8" height="1.8" fill="#e0b840"/></svg>
<div class="t" style="left:363px;top:562px;color:#7d7d7d">NVIDIA GeForce 6600</div>
<div class="t" style="left:556px;top:562px;color:#7d7d7d">NVIDIA GeForce 6600 (...</div>
<div class="t" style="right:702px;top:562px;color:#333">7</div>
<div class="t" style="right:365px;top:562px;color:#7d7d7d">1,000</div>
<div class="t" style="left:1117px;top:562px;color:#7d7d7d">шт</div>
<div class="a" style="left:291px;top:612px;width:1121px;height:1px;background:#e6e6e6"></div>
<svg class="ic" style="left:337px;top:590px" width="16" height="16" viewBox="0 0 16 16"><path d="M1.5 11C0.5 8 5 4 10 3.6C14 3.3 16 5 15 7.5C14 10 9 12.5 5 12.6C3 12.7 1.8 12.2 1.5 11Z" fill="#f2f2f2" stroke="#9a9a9a" stroke-width="0.9"/><path d="M6 12.2C9 11.5 13 9.5 14.6 7" stroke="#8fa4bd" stroke-width="1.1" fill="none"/></svg>
<div class="t" style="left:363px;top:591px;color:#7d7d7d">PS/2-совместимая мышь</div>
<div class="t" style="left:556px;top:591px;color:#7d7d7d">&lt;Не ведется учет по к...</div>
<div class="t" style="right:702px;top:591px;color:#333">8</div>
<div class="t" style="right:365px;top:591px;color:#7d7d7d">1,000</div>
<div class="t" style="left:1117px;top:591px;color:#7d7d7d">шт</div>
<div class="a" style="left:291px;top:641px;width:1121px;height:1px;background:#e6e6e6"></div>
<svg class="ic" style="left:337px;top:619px" width="16" height="16" viewBox="0 0 16 16"><path d="M3 5.5L4 3.6H12L13 5.5" fill="#fff" stroke="#8a8a8a" stroke-width="0.8"/><rect x="0.6" y="5.4" width="14.8" height="6.3" rx="1.6" fill="#d6d6d6" stroke="#555" stroke-width="1"/><rect x="2" y="6.6" width="9" height="1.2" fill="#f4f4f4"/><rect x="11.6" y="6.6" width="2" height="3.6" fill="#37c040"/></svg>
<div class="t" style="left:363px;top:620px;color:#7d7d7d">WDC WD1600AAJS-22PSA0</div>
<div class="t" style="left:556px;top:620px;color:#7d7d7d">WDC WD1600AAJS-22...</div>
<div class="t" style="right:702px;top:620px;color:#333">9</div>
<div class="t" style="right:365px;top:620px;color:#7d7d7d">1,000</div>
<div class="t" style="left:1117px;top:620px;color:#7d7d7d">шт</div>
<div class="a" style="left:291px;top:670px;width:1121px;height:1px;background:#e6e6e6"></div>
<svg class="ic" style="left:337px;top:648px" width="16" height="16" viewBox="0 0 16 16"><path d="M0.8 10.5L2.6 5.6H13.4L15.2 10.5Z" fill="#f4f4f8" stroke="#8a8aa0" stroke-width="0.8"/><g fill="#9aa0b8"><rect x="3.5" y="6.8" width="1" height="1"/><rect x="5.5" y="6.8" width="1" height="1"/><rect x="7.5" y="6.8" width="1" height="1"/><rect x="9.5" y="6.8" width="1" height="1"/><rect x="11.5" y="6.8" width="1" height="1"/><rect x="2.8" y="8.6" width="1" height="1"/><rect x="4.8" y="8.6" width="1" height="1"/><rect x="6.8" y="8.6" width="1" height="1"/><rect x="8.8" y="8.6" width="1" height="1"/><rect x="10.8" y="8.6" width="1" height="1"/><rect x="12.6" y="8.6" width="1" height="1"/></g><rect x="1" y="10.6" width="14" height="1.6" fill="#2c3450"/></svg>
<div class="t" style="left:363px;top:649px;color:#7d7d7d">Клавиатура HID</div>
<div class="t" style="left:556px;top:649px;color:#7d7d7d">&lt;Не ведется учет по к...</div>
<div class="t" style="right:702px;top:649px;color:#333">10</div>
<div class="t" style="right:365px;top:649px;color:#7d7d7d">1,000</div>
<div class="t" style="left:1117px;top:649px;color:#7d7d7d">шт</div>
<div class="a" style="left:291px;top:699px;width:1121px;height:1px;background:#e6e6e6"></div>
<svg class="ic" style="left:318px;top:677px" width="16" height="16" viewBox="0 0 16 16"><rect x="0.5" y="0.5" width="15" height="15" fill="#8aa3cf" stroke="#24386a"/><rect x="1.6" y="1.6" width="1.2" height="12.5" fill="#e6ecf6"/><rect x="3.6" y="1.4" width="3" height="2.2" fill="#f3f6fb"/><rect x="7.4" y="1.4" width="3" height="2.2" fill="#f3f6fb"/><rect x="11" y="1.2" width="4" height="2.4" fill="#e8756c"/><rect x="4.2" y="3.9" width="3.8" height="1.8" fill="#454c5e"/><rect x="3.6" y="6.6" width="3.8" height="2.6" fill="#3a3f4a"/><rect x="6.8" y="8.1" width="5" height="5" fill="#f2c860"/><rect x="8" y="9.3" width="2.6" height="2.6" fill="#c49a3a"/><rect x="11.9" y="4.2" width="1" height="10.6" fill="#7fdc7f"/><rect x="13.8" y="4.2" width="1" height="10.6" fill="#7fdc7f"/></svg>
<div class="t" style="left:344px;top:678px;color:#333">ASUS A68HM-K</div>
<div class="t" style="left:556px;top:678px;color:#333">ASUS A68HM-K</div>
<div class="t" style="right:702px;top:678px;color:#333">11</div>
<svg class="ic" style="left:781px;top:678px" width="14" height="14" viewBox="0 0 14 14"><rect x="0.5" y="0.5" width="13" height="13" rx="1.5" fill="#2f68b8" stroke="#1c4f96"/><path d="M7 11V5.5M4.2 7.5L7 4.4L9.8 7.5" stroke="#fff" stroke-width="1.6" fill="none"/><rect x="3.5" y="2.5" width="7" height="1.2" fill="#fff"/></svg>
<div class="t" style="left:804px;top:678px;">Со склада</div>
<div class="t" style="right:365px;top:678px;color:#7d7d7d">1,000</div>
<div class="t" style="left:1117px;top:678px;color:#7d7d7d">шт</div>
<div class="a" style="left:714px;top:438px;width:1px;height:261px;background:#d6d6d6"></div>
<svg class="ic" style="left:1414px;top:415px" width="10" height="8" viewBox="0 0 10 8"><path d="M1 6H9L5 1.5Z" fill="#444"/></svg>
<div class="a" style="left:1415px;top:431px;width:8px;height:257px;background:#d4d4d4;border-radius:4px"></div>
<div class="a" style="left:1415px;top:477px;width:8px;height:211px;background:#9a9a9a;border-radius:4px"></div>
<svg class="ic" style="left:1414px;top:697px" width="10" height="8" viewBox="0 0 10 8"><path d="M1.5 1H8.5L5 5Z" fill="#c0c0c0"/></svg>
<svg class="ic" style="left:298px;top:714px" width="8" height="10" viewBox="0 0 8 10"><path d="M6 1.5V8.5L1.5 5Z" fill="#c0c0c0"/></svg>
<div class="a" style="left:314px;top:714px;width:1075px;height:8px;background:#d4d4d4;border-radius:4px"></div>
<div class="a" style="left:314px;top:714px;width:602px;height:8px;background:#9a9a9a;border-radius:4px"></div>
<svg class="ic" style="left:1397px;top:713px" width="8" height="10" viewBox="0 0 8 10"><path d="M2 1.5V8.5L6.5 5Z" fill="#444"/></svg>
<div class="t" style="left:279px;top:750px;color:#4a4a4a">Основание:</div>
<div class="fld" style="left:415px;top:745px;width:1023px;height:25px;"><div class="dv" style="left:958px"></div><div class="dv" style="left:979px"></div><div class="dv" style="left:1000px"></div></div>
<div class="t" style="left:419px;top:750px;">Начало обслуживания НФ00-000001 от 26.07.2023 11:22:58</div>
<svg class="ic" style="left:1382px;top:755px" width="5" height="3" viewBox="0 0 5 3"><path d="M0 0H5L2.5 3Z" fill="#404040"/></svg>
<div class="a" style="left:1402px;top:760px;width:1px;height:1px;background:#444"></div>
<div class="a" style="left:1405px;top:760px;width:1px;height:1px;background:#444"></div>
<div class="a" style="left:1408px;top:760px;width:1px;height:1px;background:#444"></div>
<svg class="ic" style="left:1422px;top:751px" width="11" height="11" viewBox="0 0 11 11"><path d="M3.4 4.6H1.6V9.4H6.4V8" fill="none" stroke="#333" stroke-width="1.2"/><rect x="4.6" y="1.6" width="4.8" height="4.8" fill="none" stroke="#333" stroke-width="1.2"/></svg>
<div class="t" style="left:279px;top:784px;color:#4a4a4a">Комментарий:</div>
<div class="fld" style="left:415px;top:779px;width:1023px;height:25px;"></div>
<svg class="ic" style="left:281px;top:815px" width="12" height="13" viewBox="0 0 12 13"><circle cx="6" cy="3.8" r="3" fill="#e8a44a" stroke="#7a4d1a" stroke-width=".8"/><path d="M0.8 12V10C0.8 8.2 3 7.4 6 7.4C9 7.4 11.2 8.2 11.2 10V12Z" fill="#3d8fcc"/></svg>
<div class="t" style="left:311px;top:816px;color:#2c56c0;text-decoration:underline">Новый: &lt;не записан !&gt; Администратор</div>
<svg class="ic" style="left:1260px;top:817px" width="15" height="12" viewBox="0 0 15 12"><rect x="1" y="1" width="12.5" height="9.5" fill="#fff" stroke="#8aa0b8"/><path d="M3.5 3.8H11M3.5 5.8H11M3.5 7.8H11" stroke="#8aa0b8" stroke-width=".9"/></svg>
<div class="t" style="left:1288px;top:816px;color:#b0312a">Новый</div>
</body></html>
